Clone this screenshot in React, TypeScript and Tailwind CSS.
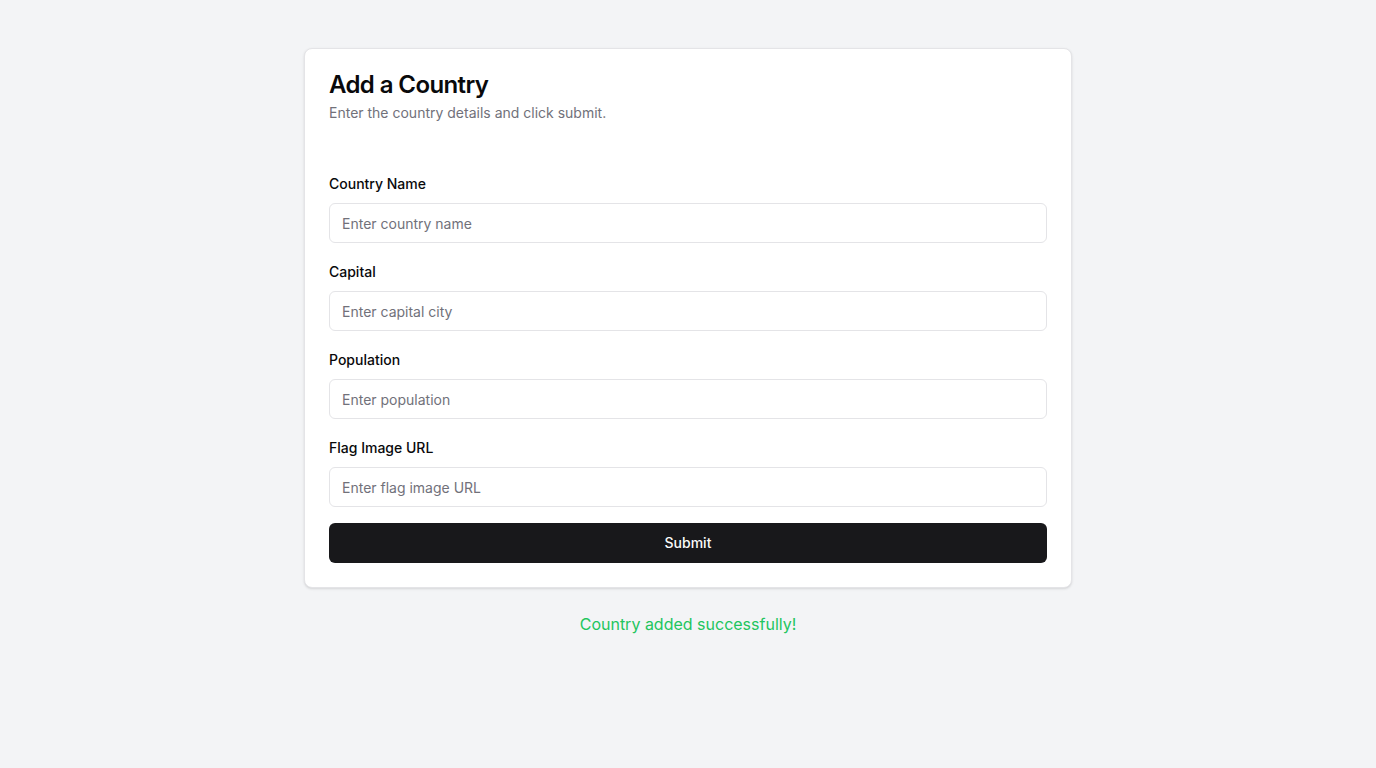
import { useState } from "react";

const fields = [
  { id: "name", label: "Country Name", placeholder: "Enter country name" },
  { id: "capital", label: "Capital", placeholder: "Enter capital city" },
  { id: "population", label: "Population", placeholder: "Enter population" },
  { id: "flag", label: "Flag Image URL", placeholder: "Enter flag image URL" },
];

export default function App() {
  const [values, setValues] = useState<Record<string, string>>({});

  return (
    <div className="min-h-screen bg-[#f3f4f6] px-4 pt-12 font-['Inter',sans-serif] text-[#09090b]">
      <div className="mx-auto max-w-3xl rounded-lg border border-[#e4e4e7] bg-white shadow-sm">
        <div className="flex flex-col gap-1.5 p-6">
          <h1 className="text-2xl leading-none font-semibold tracking-tight">Add a Country</h1>
          <p className="text-sm leading-5 text-[#71717a]">Enter the country details and click submit.</p>
        </div>
        <form
          className="flex flex-col px-6 pt-[27px] pb-6"
          onSubmit={(e) => e.preventDefault()}
        >
          <div className="flex flex-col gap-[19px]">
            {fields.map((f) => (
              <div key={f.id} className="flex flex-col gap-[9px]">
                <label htmlFor={f.id} className="text-sm leading-5 font-medium">
                  {f.label}
                </label>
                <input
                  id={f.id}
                  placeholder={f.placeholder}
                  value={values[f.id] ?? ""}
                  onChange={(e) => setValues({ ...values, [f.id]: e.target.value })}
                  className="h-10 w-full rounded-md border border-[#e4e4e7] bg-white px-3 text-sm outline-none placeholder:text-[#71717a]"
                />
              </div>
            ))}
          </div>
          <button
            type="submit"
            className="mt-4 h-10 w-full rounded-md bg-[#18181b] text-sm font-medium text-[#fafafa]"
          >
            Submit
          </button>
        </form>
      </div>
      <p className="mt-6 text-center text-base leading-6 text-[#22c55e]">Country added successfully!</p>
    </div>
  );
}
